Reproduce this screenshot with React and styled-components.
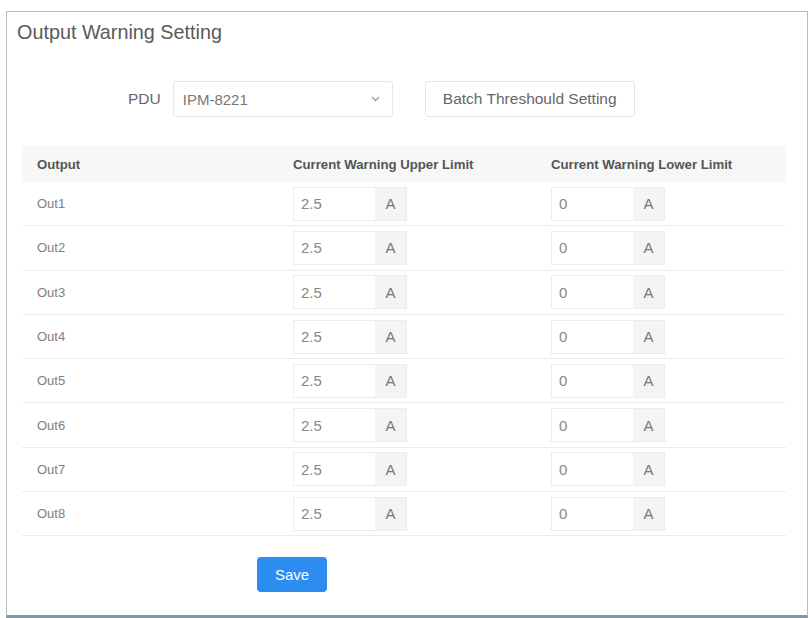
import React from 'react'
import styled, { createGlobalStyle } from 'styled-components'

const GlobalStyle = createGlobalStyle`
  body {
    margin: 0;
    background: #fff;
    font-family: "Liberation Sans", Arial, sans-serif;
  }
`

const Panel = styled.section`
  box-sizing: border-box;
  margin: 11px 4px 0 6px;
  width: 802px;
  height: 607px;
  border: 1px solid #b4bcc3;
  border-bottom: 3px solid #7f98a6;
  padding: 0 21px 0 15px;
  background: #fff;
`

const Title = styled.h2`
  margin: 0 0 0 -5px;
  padding-top: 8px;
  font-size: 19.8px;
  font-weight: normal;
  line-height: 24px;
  color: #5a5a5a;
`

const Toolbar = styled.div`
  display: flex;
  align-items: center;
  margin-top: 37px;
  padding-left: 106px;
`

const Label = styled.span`
  font-size: 15.5px;
  color: #666;
  margin-right: 12px;
`

const Select = styled.div`
  box-sizing: border-box;
  width: 220px;
  height: 36px;
  display: flex;
  align-items: center;
  justify-content: space-between;
  padding: 0 12px 0 9px;
  border: 1px solid #e8e8e8;
  border-radius: 3px;
  font-size: 15px;
  color: #777;
`

const Button = styled.button`
  box-sizing: border-box;
  margin-left: 32px;
  width: 210px;
  height: 36px;
  border: 1px solid #e6e6e6;
  border-radius: 3px;
  background: #fff;
  font-family: inherit;
  font-size: 15.5px;
  color: #666;
`

const Table = styled.div`
  margin-top: 29px;
`

const Row = styled.div`
  box-sizing: border-box;
  display: grid;
  grid-template-columns: 256px 258px 1fr;
  align-items: center;
  height: ${({ head }) => (head ? '36px' : '44.3px')};
  background: ${({ head }) => (head ? '#f7f7f7' : '#fff')};
  border-bottom: ${({ head }) => (head ? 'none' : '1px solid #ececec')};
`

const Cell = styled.div`
  padding-left: ${({ first }) => (first ? '15px' : '15px')};
  font-size: ${({ head }) => (head ? '13.2px' : '13px')};
  font-weight: ${({ head }) => (head ? 'bold' : 'normal')};
  color: ${({ head }) => (head ? '#555' : '#808080')};
`

const InputGroup = styled.div`
  display: flex;
  width: 114px;
  height: 34px;
  border: 1px solid #ececec;
  box-sizing: border-box;
`

const Input = styled.div`
  flex: 1;
  display: flex;
  align-items: center;
  padding-left: 7px;
  font-size: 15px;
  color: #888;
`

const Addon = styled.div`
  width: 31px;
  display: flex;
  align-items: center;
  justify-content: center;
  background: #f4f4f4;
  font-size: 15px;
  color: #777;
`

const Footer = styled.div`
  padding: 21px 0 0 235px;
`

const SaveButton = styled.button`
  width: 70px;
  height: 35px;
  border: none;
  border-radius: 4px;
  background: #2d8cf0;
  color: #fff;
  font-family: inherit;
  font-size: 15px;
`

const Chevron = () => (
  <svg width="9" height="6" viewBox="0 0 9 6">
    <path d="M1 1l3.5 3.5L8 1" fill="none" stroke="#999" strokeWidth="1.3" />
  </svg>
)

const outputs = ['Out1', 'Out2', 'Out3', 'Out4', 'Out5', 'Out6', 'Out7', 'Out8']

const Limit = ({ value }) => (
  <InputGroup>
    <Input>{value}</Input>
    <Addon>A</Addon>
  </InputGroup>
)

export default function App () {
  return (
    <>
      <GlobalStyle />
      <Panel>
        <Title>Output Warning Setting</Title>
        <Toolbar>
          <Label>PDU</Label>
          <Select>
            <span>IPM-8221</span>
            <Chevron />
          </Select>
          <Button>Batch Threshould Setting</Button>
        </Toolbar>
        <Table>
          <Row head>
            <Cell head first>Output</Cell>
            <Cell head>Current Warning Upper Limit</Cell>
            <Cell head>Current Warning Lower Limit</Cell>
          </Row>
          {outputs.map((name) => (
            <Row key={name}>
              <Cell first>{name}</Cell>
              <Cell><Limit value="2.5" /></Cell>
              <Cell><Limit value="0" /></Cell>
            </Row>
          ))}
        </Table>
        <Footer>
          <SaveButton>Save</SaveButton>
        </Footer>
      </Panel>
    </>
  )
}
